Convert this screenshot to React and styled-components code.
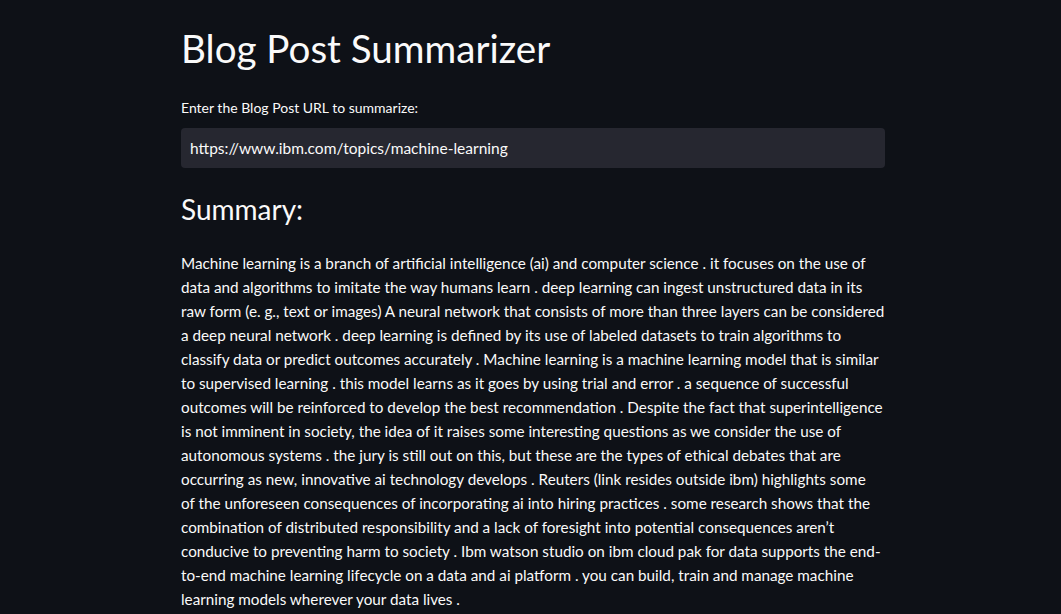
import React from 'react'
import styled, { createGlobalStyle } from 'styled-components'

const GlobalStyle = createGlobalStyle`
  html, body {
    margin: 0;
    padding: 0;
    background: #0e1117;
  }
  body {
    font-family: Lato, "Open Sans", sans-serif;
    color: #fafafa;
  }
`

const Main = styled.main`
  min-height: 614px;
  display: flex;
  justify-content: center;
  padding-left: 5px;
  background: #0e1117;
`

const Block = styled.div`
  width: 704px;
  padding-top: 24px;
  display: flex;
  flex-direction: column;
`

const Title = styled.h1`
  margin: 0;
  font-size: 38.6px;
  font-weight: 400;
  line-height: 48px;
  color: #fafafa;
`

const Label = styled.label`
  margin-top: 26px;
  font-size: 14px;
  line-height: 20px;
  color: #fafafa;
`

const Input = styled.input`
  margin-top: 10px;
  height: 40px;
  box-sizing: border-box;
  border: none;
  outline: none;
  border-radius: 4px;
  background: #262730;
  color: #fafafa;
  font-family: inherit;
  font-size: 15.5px;
  padding: 0 9px;
`

const Subtitle = styled.h2`
  margin: 24px 0 0;
  font-size: 28px;
  font-weight: 400;
  line-height: 34px;
  color: #fafafa;
`

const Summary = styled.p`
  margin: 25px 0 0;
  font-size: 15.25px;
  line-height: 24px;
  color: #fafafa;
`

const Line = styled.span`
  display: block;
  white-space: nowrap;
`

const summaryLines = [
  'Machine learning is a branch of artificial intelligence (ai) and computer science . it focuses on the use of',
  'data and algorithms to imitate the way humans learn . deep learning can ingest unstructured data in its',
  'raw form (e. g., text or images) A neural network that consists of more than three layers can be considered',
  'a deep neural network . deep learning is defined by its use of labeled datasets to train algorithms to',
  'classify data or predict outcomes accurately . Machine learning is a machine learning model that is similar',
  'to supervised learning . this model learns as it goes by using trial and error . a sequence of successful',
  'outcomes will be reinforced to develop the best recommendation . Despite the fact that superintelligence',
  'is not imminent in society, the idea of it raises some interesting questions as we consider the use of',
  'autonomous systems . the jury is still out on this, but these are the types of ethical debates that are',
  'occurring as new, innovative ai technology develops . Reuters (link resides outside ibm) highlights some',
  'of the unforeseen consequences of incorporating ai into hiring practices . some research shows that the',
  'combination of distributed responsibility and a lack of foresight into potential consequences aren\u2019t',
  'conducive to preventing harm to society . Ibm watson studio on ibm cloud pak for data supports the end-',
  'to-end machine learning lifecycle on a data and ai platform . you can build, train and manage machine',
  'learning models wherever your data lives .'
]

const App = () => {
  return (
    <Main>
      <GlobalStyle />
      <Block>
        <Title>Blog Post Summarizer</Title>
        <Label htmlFor="url">Enter the Blog Post URL to summarize:</Label>
        <Input
          id="url"
          type="text"
          defaultValue="https://www.ibm.com/topics/machine-learning"
        />
        <Subtitle>Summary:</Subtitle>
        <Summary>
          {summaryLines.map((line, i) => (
            <Line key={i}>{line}</Line>
          ))}
        </Summary>
      </Block>
    </Main>
  )
}

export default App
